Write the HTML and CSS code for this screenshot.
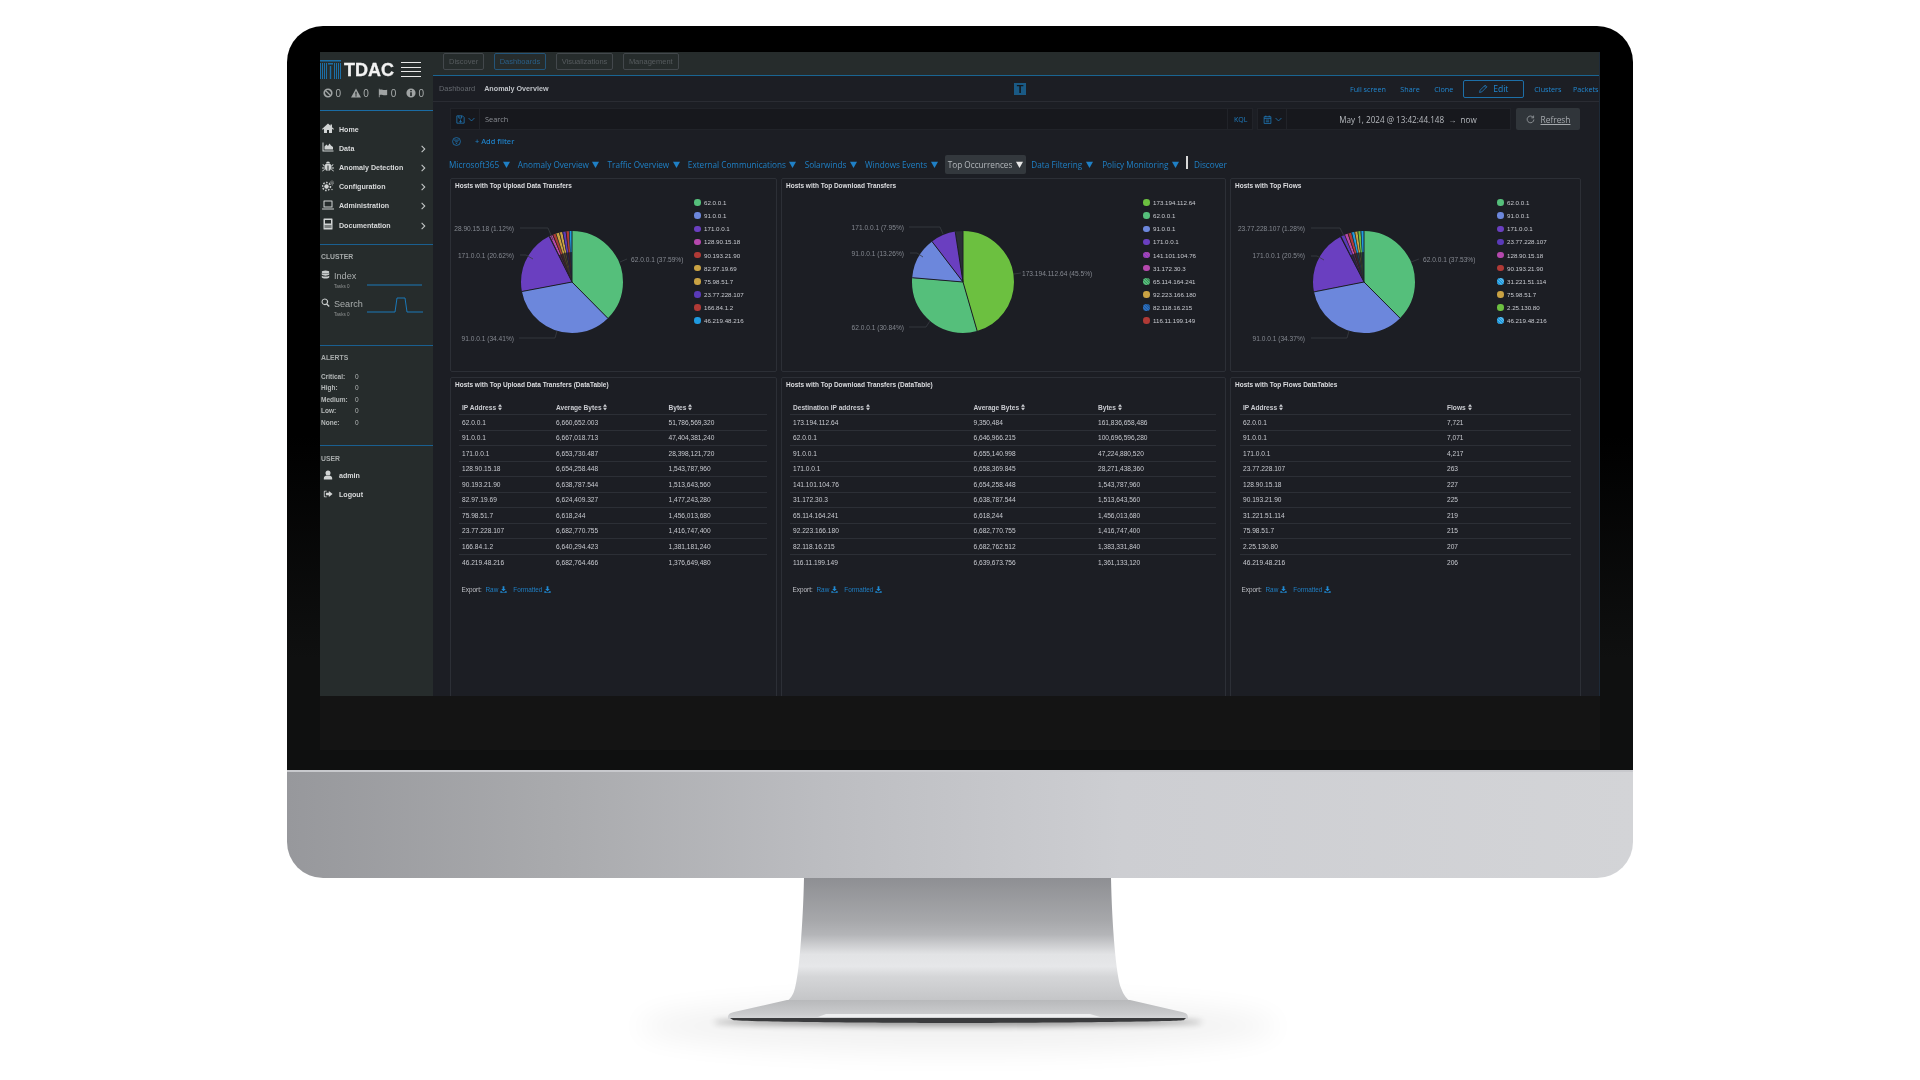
FILE: index.html
```html
<!DOCTYPE html>
<html lang="en">
<head>
<meta charset="utf-8">
<title>TDAC Anomaly Overview</title>
<link rel="stylesheet" href="styles.css">
</head>
<body>
<svg class="sprite" aria-hidden="true">
  <symbol id="i-home" viewBox="0 0 24 24"><path d="M12 3 0 14l1.6 1.6L4 13.4V22h6v-6h4v6h6v-8.6l2.4 2.2L24 14l-4-3.7V5h-3v2.5z"/></symbol>
  <symbol id="i-chart" viewBox="0 0 24 24"><path d="M1 3h2v16h20v2H1zM5 17v-6l4-4 3 3 3-5 3 4 4 3v5z"/></symbol>
  <symbol id="i-bug" viewBox="0 0 24 24"><path d="M8 7a4 4 0 0 1 8 0zM7 8h10a6 6 0 0 1 1 4v5a6 6 0 0 1-5 5V11h-2v11a6 6 0 0 1-5-5v-5a6 6 0 0 1 1-4zM1 9l1-1 3 3H6v2H4zM23 9l-1-1-3 3H18v2h2zM0 15h6v2H0zM18 15h6v2h-6zM1 23l-1-1 5-4 1 1zM23 23l1-1-5-4-1 1z"/></symbol>
  <symbol id="i-gears" viewBox="0 0 24 24"><circle class="gear" cx="9" cy="13" r="5.5"/><circle class="gear-t" cx="9" cy="13" r="8" /><circle class="gear" cx="20" cy="6" r="2.5"/><circle class="gear-t2" cx="20" cy="6" r="4"/><circle class="gear" cx="20" cy="19" r="2.2"/></symbol>
  <symbol id="i-laptop" viewBox="0 0 24 24"><path d="M4 3h16a1 1 0 0 1 1 1v13H3V4a1 1 0 0 1 1-1zm1 2v10h14V5zM0 19h24v1a1 1 0 0 1-1 1H1a1 1 0 0 1-1-1z"/></symbol>
  <symbol id="i-book" viewBox="0 0 24 24"><path d="M4 1h16a1 1 0 0 1 1 1v20a1 1 0 0 1-1 1H4a1 1 0 0 1-1-1V2a1 1 0 0 1 1-1zm2 3v7h12V4zM5 15v2h14v-2zm0 4v1h14v-1z" fill-rule="evenodd"/></symbol>
  <symbol id="i-db" viewBox="0 0 24 24"><ellipse cx="12" cy="5" rx="10" ry="4"/><path d="M2 8c2 3 18 3 20 0v4c-2 4-18 4-20 0zM2 15c2 3 18 3 20 0v4c-1 5-19 5-20 0z"/></symbol>
  <symbol id="i-search" viewBox="0 0 24 24"><path d="M10 1a9 9 0 0 1 7.2 14.4l6 6-2.6 2.6-6-6A9 9 0 1 1 10 1zm0 3a6 6 0 1 0 0 12 6 6 0 0 0 0-12z" fill-rule="evenodd"/></symbol>
  <symbol id="i-user" viewBox="0 0 24 24"><circle cx="12" cy="7" r="6"/><path d="M2 23v-4c0-4 4-5 7-6 2 1 4 1 6 0 3 1 7 2 7 6v4z"/></symbol>
  <symbol id="i-out" viewBox="0 0 24 24"><path d="M9 4H4a2 2 0 0 0-2 2v12a2 2 0 0 0 2 2h5v-2H4V6h5z"/><path d="M14 5v4H7v6h7v4l9-7z"/></symbol>
  <symbol id="i-ban" viewBox="0 0 24 24"><path d="M12 1a11 11 0 1 1 0 22 11 11 0 0 1 0-22zM5.6 7.7a8 8 0 0 0 10.7 10.7zm2.1-2.1 10.7 10.7A8 8 0 0 0 7.700 5.600z" fill-rule="evenodd"/></symbol>
  <symbol id="i-warn" viewBox="0 0 24 24"><path d="M12 1 24 23H0zm-1.500 8v7h3V9zm0 8.500v3h3v-3z" fill-rule="evenodd"/></symbol>
  <symbol id="i-flag" viewBox="0 0 24 24"><path d="M2 2h2v2c5-2 8 2 18 0v13c-9 2-13-2-18 0v5H2z"/></symbol>
  <symbol id="i-info" viewBox="0 0 24 24"><path d="M12 1a11 11 0 1 1 0 22 11 11 0 0 1 0-22zm-2 9v9h4v-9zm0-5v3h4V5z" fill-rule="evenodd"/></symbol>
  <symbol id="i-chev" viewBox="0 0 10 16"><path d="M2 1 9 8l-7 7-1.500-1.500L6 8 .5 2.500z"/></symbol>
  <symbol id="i-sort" viewBox="0 0 10 16"><path d="M5 0 10 6.500H0zM5 16 0 9.500h10z"/></symbol>
  <symbol id="i-dl" viewBox="0 0 24 24"><path d="M9 1h6v9h5l-8 8-8-8h5zM1 18h5l3 3h6l3-3h5v5H1z"/></symbol>
  <symbol id="i-tri" viewBox="0 0 10 10"><path d="M0 1h10L5 10z"/></symbol>
  <symbol id="i-save" viewBox="0 0 16 16"><path class="line-i" d="M1.500 1.500h10l3 3v10h-13zM5 1.500v4h5v-4M8 8v5M6 11l2 2 2-2"/></symbol>
  <symbol id="i-down" viewBox="0 0 12 8"><path class="line-i" d="m1 1.500 5 5 5-5"/></symbol>
  <symbol id="i-filter" viewBox="0 0 16 16"><circle class="line-i" cx="8" cy="8" r="7"/><path class="line-i" d="M3.500 5.500h9M5.500 8.500h5M7 11.500h2"/></symbol>
  <symbol id="i-cal" viewBox="0 0 16 16"><path class="line-i" d="M2 3h12v12H2zM5 1v3M11 1v3M2 6h12M5 9h6M5 12h6"/></symbol>
  <symbol id="i-pen" viewBox="0 0 16 16"><path class="line-i" d="M11 2l3 3-9 9-4 1 1-4zM9.500 3.500l3 3"/></symbol>
  <symbol id="i-refresh" viewBox="0 0 16 16"><path class="line-i" d="M13 4.500A6 6 0 1 0 14 8M13.500 1v4h-4"/></symbol>
</svg>

<main class="imac">
  <div class="bezel">
    <div class="screen">
      <aside class="sidebar">
        <div class="side-head">
          <div class="logo-row">
            <svg class="logo-mark" viewBox="0 0 21 19" aria-hidden="true">
              <rect class="bl" x="0" y="0" width="21" height="1.500"/>
              <rect class="bl" x="0" y="3" width="1" height="16"/><rect class="bl" x="2" y="3" width="1" height="16"/><rect class="bl" x="4" y="3" width="1" height="16"/><rect class="bl" x="6" y="3" width="1" height="16"/>
              <rect class="bl" x="8" y="3" width="5" height="1.500"/>
              <rect class="bl" x="14" y="3" width="1" height="16"/><rect class="bl" x="16" y="3" width="1" height="16"/><rect class="bl" x="18" y="3" width="1" height="16"/><rect class="bl" x="20" y="3" width="1" height="16"/>
              <rect class="bl" x="9.800" y="6" width="1.400" height="13"/>
            </svg>
            <span class="logo-text">TDAC</span>
            <span class="burger"><i></i><i></i><i></i><i></i></span>
          </div>
          <div class="status">
            <span class="st"><svg class="ic-st"><use href="#i-ban"/></svg>0</span>
            <span class="st"><svg class="ic-st"><use href="#i-warn"/></svg>0</span>
            <span class="st"><svg class="ic-st"><use href="#i-flag"/></svg>0</span>
            <span class="st"><svg class="ic-st"><use href="#i-info"/></svg>0</span>
          </div>
        </div>
        <nav class="menu rule">
          <a class="mi"><svg class="ic-m"><use href="#i-home"/></svg>Home</a>
          <a class="mi"><svg class="ic-m"><use href="#i-chart"/></svg>Data<svg class="chev"><use href="#i-chev"/></svg></a>
          <a class="mi"><svg class="ic-m"><use href="#i-bug"/></svg>Anomaly Detection<svg class="chev"><use href="#i-chev"/></svg></a>
          <a class="mi"><svg class="ic-m"><use href="#i-gears"/></svg>Configuration<svg class="chev"><use href="#i-chev"/></svg></a>
          <a class="mi"><svg class="ic-m"><use href="#i-laptop"/></svg>Administration<svg class="chev"><use href="#i-chev"/></svg></a>
          <a class="mi"><svg class="ic-m"><use href="#i-book"/></svg>Documentation<svg class="chev"><use href="#i-chev"/></svg></a>
        </nav>
        <section class="cluster rule">
          <h4 class="side-label">CLUSTER</h4>
          <div class="node">
            <div class="node-txt">
              <div class="node-name"><svg class="ic-n"><use href="#i-db"/></svg>Index</div>
              <div class="node-sub">Tasks 0</div>
            </div>
            <svg class="spark" viewBox="0 0 56 22"><path d="M0 16H55"/></svg>
          </div>
          <div class="node">
            <div class="node-txt">
              <div class="node-name"><svg class="ic-n"><use href="#i-search"/></svg>Search</div>
              <div class="node-sub">Tasks 0</div>
            </div>
            <svg class="spark" viewBox="0 0 56 22"><path d="M0 15H28L30 1H38L40 15H56"/></svg>
          </div>
        </section>
        <section class="alerts rule">
          <h4 class="side-label">ALERTS</h4>
          <div class="al"><b>Critical:</b><span>0</span></div>
          <div class="al"><b>High:</b><span>0</span></div>
          <div class="al"><b>Medium:</b><span>0</span></div>
          <div class="al"><b>Low:</b><span>0</span></div>
          <div class="al"><b>None:</b><span>0</span></div>
        </section>
        <section class="user">
          <h4 class="side-label">USER</h4>
          <a class="mi"><svg class="ic-m"><use href="#i-user"/></svg>admin</a>
          <a class="mi"><svg class="ic-m"><use href="#i-out"/></svg>Logout</a>
        </section>
      </aside>

      <div class="content">
        <div class="topbar">
          <span class="tbtn">Discover</span>
          <span class="tbtn on">Dashboards</span>
          <span class="tbtn">Visualizations</span>
          <span class="tbtn">Management</span>
        </div>
        <div class="crumbs">
          <div class="crumb-left"><span class="c1">Dashboard</span><span class="c2">Anomaly Overview</span></div>
          <span class="t-logo">T</span>
          <div class="crumb-right">
            <a>Full screen</a><a>Share</a><a>Clone</a>
            <a class="edit"><svg class="ic-s"><use href="#i-pen"/></svg>Edit</a>
            <a>Clusters</a><a>Packets</a>
          </div>
        </div>

        <div class="query">
          <div class="qbar search">
            <span class="seg seg-ic"><svg class="ic-s"><use href="#i-save"/></svg><svg class="ic-d"><use href="#i-down"/></svg></span>
            <span class="q-ph">Search</span>
            <span class="seg kql">KQL</span>
          </div>
          <div class="qbar date">
            <span class="seg seg-ic"><svg class="ic-s"><use href="#i-cal"/></svg><svg class="ic-d"><use href="#i-down"/></svg></span>
            <span class="q-date">May 1, 2024 @ 13:42:44.148 &nbsp;→&nbsp; now</span>
          </div>
          <span class="refresh"><svg class="ic-s"><use href="#i-refresh"/></svg><u>Refresh</u></span>
        </div>

        <div class="filter-row">
          <svg class="ic-f"><use href="#i-filter"/></svg>
          <a class="add">+ Add filter</a>
        </div>

        <div class="tabs">
          <a class="tab">Microsoft365<svg class="tri"><use href="#i-tri"/></svg></a>
          <a class="tab">Anomaly Overview<svg class="tri"><use href="#i-tri"/></svg></a>
          <a class="tab">Traffic Overview<svg class="tri"><use href="#i-tri"/></svg></a>
          <a class="tab">External Communications<svg class="tri"><use href="#i-tri"/></svg></a>
          <a class="tab">Solarwinds<svg class="tri"><use href="#i-tri"/></svg></a>
          <a class="tab">Windows Events<svg class="tri"><use href="#i-tri"/></svg></a>
          <a class="tab active">Top Occurrences<svg class="tri"><use href="#i-tri"/></svg></a>
          <a class="tab">Data Filtering<svg class="tri"><use href="#i-tri"/></svg></a>
          <a class="tab">Policy Monitoring<svg class="tri"><use href="#i-tri"/></svg></a>
          <span class="vbar"></span>
          <a class="tab">Discover</a>
        </div>

        <div class="grid">
          <!-- Upload pie -->
          <section class="panel">
            <h3 class="ptitle">Hosts with Top Upload Data Transfers</h3>
            <div class="pbody">
              <svg class="chart w1" viewBox="451 190 243 181">
                <g transform="rotate(-90 572 282)">
                  <circle class="sl green" cx="572" cy="282" r="25.500" pathLength="100" stroke-dasharray="37.590 100"/>
                  <circle class="sl blue" cx="572" cy="282" r="25.500" pathLength="100" stroke-dasharray="34.410 100" stroke-dashoffset="-37.590"/>
                  <circle class="sl purple" cx="572" cy="282" r="25.500" pathLength="100" stroke-dasharray="20.620 100" stroke-dashoffset="-72"/>
                  <circle class="sl pink" cx="572" cy="282" r="25.500" pathLength="100" stroke-dasharray="1.120 100" stroke-dashoffset="-92.620"/>
                  <circle class="sl red" cx="572" cy="282" r="25.500" pathLength="100" stroke-dasharray="1 100" stroke-dashoffset="-93.740"/>
                  <circle class="sl gold" cx="572" cy="282" r="25.500" pathLength="100" stroke-dasharray="1.100 100" stroke-dashoffset="-94.740"/>
                  <circle class="sl gold" cx="572" cy="282" r="25.500" pathLength="100" stroke-dasharray="1.050 100" stroke-dashoffset="-95.840"/>
                  <circle class="sl indigo" cx="572" cy="282" r="25.500" pathLength="100" stroke-dasharray="1.050 100" stroke-dashoffset="-96.890"/>
                  <circle class="sl red" cx="572" cy="282" r="25.500" pathLength="100" stroke-dasharray="1.030 100" stroke-dashoffset="-97.940"/>
                  <circle class="sl sky" cx="572" cy="282" r="25.500" pathLength="100" stroke-dasharray="1.030 100" stroke-dashoffset="-98.970"/>
                  <circle class="core" cx="572" cy="282" r="15" pathLength="100" stroke-dasharray="7.380 100" stroke-dashoffset="-92.620"/>
                  <circle class="tick" cx="572" cy="282" r="25.500" pathLength="100" stroke-dasharray=".25 .87 .25 .75 .25 .85 .25 .8 .25 .8 .25 .78 .25 100" stroke-dashoffset="-92.620"/>
                </g>
                <path class="sep" d="M607.900 318.300 572 282 521.900 291.500M549.200 236.400 572 282V231"/>
                <path class="lead" d="M520 228H548L553 240M520 255H526L533 259M620 262L627 259M519 338H555L557 331"/>
                <text class="lbl" x="514" y="230.500" text-anchor="end">28.90.15.18 (1.12%)</text>
                <text class="lbl" x="514" y="257.500" text-anchor="end">171.0.0.1 (20.62%)</text>
                <text class="lbl" x="631" y="261.500">62.0.0.1 (37.59%)</text>
                <text class="lbl" x="514" y="340.500" text-anchor="end">91.0.0.1 (34.41%)</text>
              </svg>
              <ul class="legend">
                <li><i class="dot d-green"></i>62.0.0.1</li><li><i class="dot d-blue"></i>91.0.0.1</li><li><i class="dot d-purple"></i>171.0.0.1</li><li><i class="dot d-pink"></i>128.90.15.18</li><li><i class="dot d-red"></i>90.193.21.90</li><li><i class="dot d-gold"></i>82.97.19.69</li><li><i class="dot d-gold"></i>75.98.51.7</li><li><i class="dot d-indigo"></i>23.77.228.107</li><li><i class="dot d-red"></i>166.84.1.2</li><li><i class="dot d-sky"></i>46.219.48.216</li>
              </ul>
            </div>
          </section>

          <!-- Download pie -->
          <section class="panel">
            <h3 class="ptitle">Hosts with Top Download Transfers</h3>
            <div class="pbody">
              <svg class="chart w2" viewBox="782 190 361 181">
                <g transform="rotate(-90 963 282)">
                  <circle class="sl lime" cx="963" cy="282" r="25.500" pathLength="100" stroke-dasharray="45.500 100"/>
                  <circle class="sl green" cx="963" cy="282" r="25.500" pathLength="100" stroke-dasharray="30.840 100" stroke-dashoffset="-45.500"/>
                  <circle class="sl blue" cx="963" cy="282" r="25.500" pathLength="100" stroke-dasharray="13.260 100" stroke-dashoffset="-76.340"/>
                  <circle class="sl purple" cx="963" cy="282" r="25.500" pathLength="100" stroke-dasharray="7.950 100" stroke-dashoffset="-89.600"/>
                  <circle class="sl dim" cx="963" cy="282" r="25.500" pathLength="100" stroke-dasharray="2.450 100" stroke-dashoffset="-97.550"/>
                </g>
                <path class="sep" d="M977.200 331 963 282 912.200 277.700M932 241.500 963 282 955.200 231.600M963 282V231"/>
                <path class="lead" d="M909 227H940L943 234M910 253H917L923 257M1014 274L1021 273M909 327H926L930 321"/>
                <text class="lbl" x="904" y="229.500" text-anchor="end">171.0.0.1 (7.95%)</text>
                <text class="lbl" x="904" y="255.500" text-anchor="end">91.0.0.1 (13.26%)</text>
                <text class="lbl" x="1022" y="275.500">173.194.112.64 (45.5%)</text>
                <text class="lbl" x="904" y="329.500" text-anchor="end">62.0.0.1 (30.84%)</text>
              </svg>
              <ul class="legend">
                <li><i class="dot d-lime"></i>173.194.112.64</li><li><i class="dot d-green"></i>62.0.0.1</li><li><i class="dot d-blue"></i>91.0.0.1</li><li><i class="dot d-purple"></i>171.0.0.1</li><li><i class="dot d-hatch-v"></i>141.101.104.76</li><li><i class="dot d-pink"></i>31.172.30.3</li><li><i class="dot d-hatch-g"></i>65.114.164.241</li><li><i class="dot d-gold"></i>92.223.166.180</li><li><i class="dot d-hatch-b"></i>82.118.16.215</li><li><i class="dot d-red"></i>116.11.199.149</li>
              </ul>
            </div>
          </section>

          <!-- Flows pie -->
          <section class="panel">
            <h3 class="ptitle">Hosts with Top Flows</h3>
            <div class="pbody">
              <svg class="chart w3" viewBox="1231 190 266 181">
                <g transform="rotate(-90 1364 282)">
                  <circle class="sl green" cx="1364" cy="282" r="25.500" pathLength="100" stroke-dasharray="37.530 100"/>
                  <circle class="sl blue" cx="1364" cy="282" r="25.500" pathLength="100" stroke-dasharray="34.370 100" stroke-dashoffset="-37.530"/>
                  <circle class="sl purple" cx="1364" cy="282" r="25.500" pathLength="100" stroke-dasharray="20.500 100" stroke-dashoffset="-71.900"/>
                  <circle class="sl indigo" cx="1364" cy="282" r="25.500" pathLength="100" stroke-dasharray="1.280 100" stroke-dashoffset="-92.400"/>
                  <circle class="sl pink" cx="1364" cy="282" r="25.500" pathLength="100" stroke-dasharray="1.100 100" stroke-dashoffset="-93.680"/>
                  <circle class="sl red" cx="1364" cy="282" r="25.500" pathLength="100" stroke-dasharray="1.100 100" stroke-dashoffset="-94.780"/>
                  <circle class="sl sky" cx="1364" cy="282" r="25.500" pathLength="100" stroke-dasharray="1 100" stroke-dashoffset="-95.880"/>
                  <circle class="sl gold" cx="1364" cy="282" r="25.500" pathLength="100" stroke-dasharray="1 100" stroke-dashoffset="-96.880"/>
                  <circle class="sl lime" cx="1364" cy="282" r="25.500" pathLength="100" stroke-dasharray="1 100" stroke-dashoffset="-97.880"/>
                  <circle class="sl sky" cx="1364" cy="282" r="25.500" pathLength="100" stroke-dasharray="1.120 100" stroke-dashoffset="-98.880"/>
                  <circle class="core" cx="1364" cy="282" r="15" pathLength="100" stroke-dasharray="7.600 100" stroke-dashoffset="-92.400"/>
                  <circle class="tick" cx="1364" cy="282" r="25.500" pathLength="100" stroke-dasharray=".25 1.030 .25 .85 .25 .85 .25 .75 .25 .75 .25 .75 .25 100" stroke-dashoffset="-92.400"/>
                </g>
                <path class="sep" d="M1400 318.100 1364 282 1314 291.900M1340.500 236.700 1364 282V231"/>
                <path class="lead" d="M1311 228H1340L1344 236M1311 256H1317L1324 260M1411 262L1419 259M1311 338H1347L1349 331"/>
                <text class="lbl" x="1305" y="230.500" text-anchor="end">23.77.228.107 (1.28%)</text>
                <text class="lbl" x="1305" y="258" text-anchor="end">171.0.0.1 (20.5%)</text>
                <text class="lbl" x="1423" y="261.500">62.0.0.1 (37.53%)</text>
                <text class="lbl" x="1305" y="340.500" text-anchor="end">91.0.0.1 (34.37%)</text>
              </svg>
              <ul class="legend">
                <li><i class="dot d-green"></i>62.0.0.1</li><li><i class="dot d-blue"></i>91.0.0.1</li><li><i class="dot d-purple"></i>171.0.0.1</li><li><i class="dot d-indigo"></i>23.77.228.107</li><li><i class="dot d-pink"></i>128.90.15.18</li><li><i class="dot d-red"></i>90.193.21.90</li><li><i class="dot d-hatch-s"></i>31.221.51.114</li><li><i class="dot d-gold"></i>75.98.51.7</li><li><i class="dot d-lime"></i>2.25.130.80</li><li><i class="dot d-hatch-s"></i>46.219.48.216</li>
              </ul>
            </div>
          </section>

          <!-- Upload table -->
          <section class="panel">
            <h3 class="ptitle">Hosts with Top Upload Data Transfers (DataTable)</h3>
            <table class="tbl t1">
              <thead><tr><th>IP Address <svg class="sort"><use href="#i-sort"/></svg></th><th>Average Bytes <svg class="sort"><use href="#i-sort"/></svg></th><th>Bytes <svg class="sort"><use href="#i-sort"/></svg></th></tr></thead>
              <tbody>
                <tr><td>62.0.0.1</td><td>6,660,652.003</td><td>51,786,569,320</td></tr>
                <tr><td>91.0.0.1</td><td>6,667,018.713</td><td>47,404,381,240</td></tr>
                <tr><td>171.0.0.1</td><td>6,653,730.487</td><td>28,398,121,720</td></tr>
                <tr><td>128.90.15.18</td><td>6,654,258.448</td><td>1,543,787,960</td></tr>
                <tr><td>90.193.21.90</td><td>6,638,787.544</td><td>1,513,643,560</td></tr>
                <tr><td>82.97.19.69</td><td>6,624,409.327</td><td>1,477,243,280</td></tr>
                <tr><td>75.98.51.7</td><td>6,618,244</td><td>1,456,013,680</td></tr>
                <tr><td>23.77.228.107</td><td>6,682,770.755</td><td>1,416,747,400</td></tr>
                <tr><td>166.84.1.2</td><td>6,640,294.423</td><td>1,381,181,240</td></tr>
                <tr><td>46.219.48.216</td><td>6,682,764.466</td><td>1,376,649,480</td></tr>
              </tbody>
            </table>
            <div class="export"><span class="ex-l">Export:</span><a>Raw <svg class="ic-dl"><use href="#i-dl"/></svg></a><a>Formatted <svg class="ic-dl"><use href="#i-dl"/></svg></a></div>
          </section>

          <!-- Download table -->
          <section class="panel">
            <h3 class="ptitle">Hosts with Top Download Transfers (DataTable)</h3>
            <table class="tbl t2">
              <thead><tr><th>Destination IP address <svg class="sort"><use href="#i-sort"/></svg></th><th>Average Bytes <svg class="sort"><use href="#i-sort"/></svg></th><th>Bytes <svg class="sort"><use href="#i-sort"/></svg></th></tr></thead>
              <tbody>
                <tr><td>173.194.112.64</td><td>9,350,484</td><td>161,836,658,486</td></tr>
                <tr><td>62.0.0.1</td><td>6,646,966.215</td><td>100,696,596,280</td></tr>
                <tr><td>91.0.0.1</td><td>6,655,140.998</td><td>47,224,880,520</td></tr>
                <tr><td>171.0.0.1</td><td>6,658,369.845</td><td>28,271,438,360</td></tr>
                <tr><td>141.101.104.76</td><td>6,654,258.448</td><td>1,543,787,960</td></tr>
                <tr><td>31.172.30.3</td><td>6,638,787.544</td><td>1,513,643,560</td></tr>
                <tr><td>65.114.164.241</td><td>6,618,244</td><td>1,456,013,680</td></tr>
                <tr><td>92.223.166.180</td><td>6,682,770.755</td><td>1,416,747,400</td></tr>
                <tr><td>82.118.16.215</td><td>6,682,762.512</td><td>1,383,331,840</td></tr>
                <tr><td>116.11.199.149</td><td>6,639,673.756</td><td>1,361,133,120</td></tr>
              </tbody>
            </table>
            <div class="export"><span class="ex-l">Export:</span><a>Raw <svg class="ic-dl"><use href="#i-dl"/></svg></a><a>Formatted <svg class="ic-dl"><use href="#i-dl"/></svg></a></div>
          </section>

          <!-- Flows table -->
          <section class="panel">
            <h3 class="ptitle">Hosts with Top Flows DataTables</h3>
            <table class="tbl t3">
              <thead><tr><th>IP Address <svg class="sort"><use href="#i-sort"/></svg></th><th>Flows <svg class="sort"><use href="#i-sort"/></svg></th></tr></thead>
              <tbody>
                <tr><td>62.0.0.1</td><td>7,721</td></tr>
                <tr><td>91.0.0.1</td><td>7,071</td></tr>
                <tr><td>171.0.0.1</td><td>4,217</td></tr>
                <tr><td>23.77.228.107</td><td>263</td></tr>
                <tr><td>128.90.15.18</td><td>227</td></tr>
                <tr><td>90.193.21.90</td><td>225</td></tr>
                <tr><td>31.221.51.114</td><td>219</td></tr>
                <tr><td>75.98.51.7</td><td>215</td></tr>
                <tr><td>2.25.130.80</td><td>207</td></tr>
                <tr><td>46.219.48.216</td><td>206</td></tr>
              </tbody>
            </table>
            <div class="export"><span class="ex-l">Export:</span><a>Raw <svg class="ic-dl"><use href="#i-dl"/></svg></a><a>Formatted <svg class="ic-dl"><use href="#i-dl"/></svg></a></div>
          </section>
        </div>
      </div>
    </div>
    <div class="under-screen"></div>
  </div>
  <div class="chin"></div>
</main>

<svg class="stand" viewBox="0 878 1920 202" aria-hidden="true">
  <defs>
    <linearGradient id="neck" x1="0" y1="0" x2="0" y2="1">
      <stop offset="0" stop-color="#8e8f93"/><stop offset=".35" stop-color="#a7a8ab"/><stop offset=".46" stop-color="#b4b5b8"/><stop offset=".62" stop-color="#e2e3e5"/><stop offset=".72" stop-color="#e6e7e9"/><stop offset=".8" stop-color="#d5d6d8"/><stop offset="1" stop-color="#c4c5c7"/>
    </linearGradient>
    <linearGradient id="foot" x1="0" y1="0" x2="0" y2="1">
      <stop offset="0" stop-color="#b8b9bb"/><stop offset=".7" stop-color="#c9cacc"/><stop offset="1" stop-color="#d6d7d9"/>
    </linearGradient>
    <filter id="soft" x="-30%" y="-200%" width="160%" height="500%"><feGaussianBlur stdDeviation="14"/></filter>
    <filter id="soft2" x="-10%" y="-200%" width="120%" height="500%"><feGaussianBlur stdDeviation="3"/></filter>
  </defs>
  <ellipse class="sh1" cx="958" cy="1026" rx="320" ry="26" filter="url(#soft)"/>
  <ellipse class="sh2" cx="958" cy="1022" rx="245" ry="4" filter="url(#soft2)"/>
  <path class="neck" d="M804 878H1111C1112 925 1116 975 1121 988C1124 996 1127 999 1130 1001H787C790 999 793 996 795 988C799 975 803 925 804 878Z"/>
  <path class="foot" d="M787 1000H1130L1182 1012C1187 1013 1188 1015 1188 1018V1019H728V1018C728 1015 729 1013 734 1012Z"/>
  <path class="foot-hi" d="M826 1014H1090L1100 1017H818Z"/>
  <path class="foot-dk" d="M730 1018H1186L1184 1020C1180 1022 1000 1023 958 1023C916 1023 740 1022 733 1020Z"/>
</svg>
</body>
</html>
```

FILE: styles.css
```css
* { box-sizing: border-box; }
html, body { margin: 0; padding: 0; background: #fff; }
body { width: 1920px; height: 1080px; overflow: hidden; font-family: "Liberation Sans", Arial, sans-serif; color: #ccc; }
h3, h4, ul { margin: 0; padding: 0; font-weight: 700; list-style: none; }
a { cursor: pointer; }
.sprite { position: absolute; width: 0; height: 0; overflow: hidden; }
.line-i { fill: none; stroke: currentColor; stroke-width: 1.3; }

/* Monitor */
.imac { width: 1346px; margin: 26px auto 0; }
.bezel { height: 744px; padding: 26px 33px 0; border-radius: 36px 36px 0 0; background: linear-gradient(180deg, #000 0, #000 55%, #0f1010 85%, #0f1010 100%); }
.screen { display: flex; height: 644px; overflow: hidden; background: #1c1e24; filter: blur(.3px); }
.under-screen { height: 54px; background: #141414; }
.chin { height: 108px; border-top: 2px solid #c8c9cd; border-radius: 0 0 36px 36px; background: linear-gradient(90deg, #97989c 0, #a9aaad 20%, #bcbdc1 40%, #cdced2 62%, #d3d4d7 100%); }
.stand { display: block; width: 1920px; height: 202px; }
.neck { fill: url(#neck); }
.foot { fill: url(#foot); }
.foot-hi { fill: #eeeff0; }
.foot-dk { fill: #3a3b3d; }
.sh1 { fill: #000; opacity: .05; }
.sh2 { fill: #000; opacity: .4; }

/* Sidebar */
.sidebar { flex: 0 0 113px; background: #262c2c; }
.side-head { height: 59px; padding-top: 8px; border-bottom: 1px solid #1a6ca4; }
.logo-row { display: flex; align-items: center; height: 19px; }
.logo-mark { width: 21px; height: 19px; }
.bl { fill: #1c6ea6; }
.logo-text { margin-left: 3px; padding-top: 1.500px; font-size: 18px; font-weight: 700; color: #f2f2f2; line-height: 19px; letter-spacing: 0; -webkit-text-stroke: .3px #f2f2f2; }
.burger { display: flex; flex-direction: column; gap: 3.300px; width: 20px; margin-left: 7px; }
.burger i { display: block; height: 1.200px; background: #e8e8e8; }
.status { display: flex; justify-content: space-between; padding: 0 9px 0 3px; margin-top: 8.500px; font-size: 10px; line-height: 11px; color: #a9adad; }
.st { display: flex; align-items: center; gap: 2.500px; }
.ic-st { width: 10px; height: 10px; fill: #a0a4a4; }
.rule { border-bottom: 1px solid #1a5f90; }
.menu { height: 133.500px; padding-top: 9px; }
.mi { display: flex; align-items: center; height: 19.200px; padding: 0 7px 0 2px; font-size: 7.100px; font-weight: 700; color: #d8dadb; }
.ic-m { flex: none; width: 12px; height: 12px; margin-right: 5px; margin-top: -3px; fill: #d0d3d3; }
.gear { fill: #d0d3d3; stroke: #262c2c; stroke-width: 2; }
.gear-t { fill: none; stroke: #d0d3d3; stroke-width: 3; stroke-dasharray: 3 3; }
.gear-t2 { fill: none; stroke: #d0d3d3; stroke-width: 1.500; stroke-dasharray: 2 2; }
.chev { width: 5px; height: 8px; margin-left: auto; fill: #c4c8c8; }
.side-label { height: 12px; padding-left: 1px; font-size: 6.800px; line-height: 12px; color: #a7abab; letter-spacing: 0; }
.cluster { height: 101px; padding-top: 6px; }
.node { display: flex; height: 22px; margin-top: 6px; }
.node-txt { width: 47px; padding-left: 1px; }
.node-name { display: flex; align-items: center; height: 14px; font-size: 9.100px; color: #a9adad; }
.ic-n { width: 9px; height: 9px; margin: -2px 4px 0 0; fill: #c8cccc; }
.node-sub { height: 6px; padding-left: 13px; margin-top: 1px; font-size: 4.600px; line-height: 6px; color: #8f9393; }
.spark { width: 56px; height: 22px; fill: none; stroke: #1a78b8; stroke-width: 1; }
.alerts { height: 100.500px; padding-top: 6px; }
.al { display: flex; height: 11.600px; padding-left: 1px; font-size: 6.500px; line-height: 11.600px; color: #b5b9b9; }
.side-label + .al { margin-top: 7px; }
.al b { width: 34px; }
.user { padding-top: 6.500px; }
.user .side-label { margin-bottom: 2px; }
.user .ic-m { width: 10px; height: 10px; margin: -2px 6px 0 1px; }

/* Content */
.content { flex: 1; min-width: 0; background: #1c1e24; border-right: 1px solid #1d2a38; }
.topbar { display: flex; gap: 9.500px; height: 24px; padding: 1px 0 0 10px; background: #262c2c; border-bottom: 1px solid #1a6592; }
.tbtn { height: 17px; padding: 0 5px; border: 1px solid #43484c; border-radius: 2px; font-size: 7.500px; line-height: 15px; color: #565b5e; }
.tbtn.on { border-color: #245478; color: #2a5f88; }
.crumbs { display: flex; align-items: center; height: 26px; border-bottom: 1px solid #2a2c33; }
.crumb-left { display: flex; gap: 9px; width: 581px; padding-left: 6px; font-size: 7.400px; }
.c1 { color: #666a70; }
.c2 { color: #bfc2c7; font-weight: 700; font-size: 7.200px; }
.t-logo { width: 12px; height: 12px; background: #1a5a85; color: #14181c; font-size: 11px; font-weight: 700; line-height: 12px; text-align: center; }
.crumb-right { display: flex; align-items: center; gap: 14.500px; margin-left: auto; padding-right: .5px; font-family: "Open Sans", sans-serif; font-size: 7.200px; font-weight: 500; color: #2187d0; }
.crumb-right a:last-child { margin-left: -3px; }
.edit { display: flex; align-items: center; justify-content: center; gap: 5px; width: 61px; height: 18px; margin: 0 -4.500px; border: 1px solid #1d6fa8; border-radius: 2px; font-size: 8.600px; }
.ic-s { width: 9px; height: 9px; }

.query { display: flex; height: 22px; margin: 6px 0 0 17px; }
.qbar { display: flex; align-items: center; height: 22px; background: #17181d; border: 1px solid #212329; }
.search { width: 803px; margin-right: 4px; }
.date { width: 254px; margin-right: 5px; }
.seg { display: flex; align-items: center; height: 100%; }
.seg-ic { flex: none; justify-content: center; gap: 3px; width: 29px; border-right: 1px solid #212329; color: #1f7fc4; }
.ic-d { width: 7px; height: 5px; }
.q-ph { flex: 1; padding-left: 5px; font-family: "Open Sans", sans-serif; font-size: 7.400px; color: #8a8d93; }
.kql { width: 25px; padding-left: 6px; border-left: 1px solid #212329; font-size: 7px; font-family: "Open Sans", sans-serif; color: #1f7fc4; }
.q-date { flex: 1; padding-left: 19px; text-align: center; font-family: "Open Sans", sans-serif; font-size: 8.100px; color: #b6b9be; white-space: nowrap; }
.refresh { display: flex; align-items: center; justify-content: center; gap: 6px; width: 64px; height: 22px; border-radius: 2px; background: #30353a; font-family: "Open Sans", sans-serif; font-size: 8.400px; color: #a6aaae; }

.filter-row { display: flex; align-items: center; height: 22px; margin-left: 17px; }
.ic-f { width: 9px; height: 9px; margin-left: 2px; color: #1f7fc4; }
.add { margin-left: 14px; font-family: "Open Sans", sans-serif; font-size: 7.400px; font-weight: 600; color: #1f7fc4; }

.tabs { display: flex; align-items: center; height: 19px; margin: 2.500px 0 0 16px; font-family: "Open Sans", sans-serif; font-size: 8.200px; color: #1f80c6; white-space: nowrap; }
.tab { display: flex; align-items: center; height: 19px; margin-right: 8.200px; }
.tab.active { margin: 0 5.500px 0 -1px; padding: 0 3px; border-radius: 2px; background: #33383d; color: #b4b8bc; }
.active ~ .tab { margin-right: 9.500px; }
.tri { width: 7px; height: 7px; margin-left: 3.500px; fill: currentColor; }
.active .tri { fill: #e8e8e8; }
.vbar { width: 1.500px; height: 13px; margin: -4px 6px 0 -2px; background: #d8d8d8; }

.grid { display: grid; grid-template-columns: 327px 445px 351px; grid-template-rows: 194px 340px; gap: 5px 4px; margin: 4.500px 0 0 17px; }
.panel { min-width: 0; overflow: hidden; background: #1c1e24; border: 1px solid #2c2f36; border-radius: 2px; }
.ptitle { height: 11px; padding: 3px 0 0 4px; font-size: 6.500px; line-height: 8px; color: #dcdde0; white-space: nowrap; }
.pbody { display: flex; }
.chart { flex: none; height: 181px; }
.w1 { width: 243px; }
.w2 { width: 361px; }
.w3 { width: 266px; }
.sl { fill: none; stroke-width: 51; }
.green { stroke: #55bf7b; }
.blue { stroke: #6c87dc; }
.purple { stroke: #6a3fc0; }
.pink { stroke: #b548ad; }
.red { stroke: #b03a36; }
.gold { stroke: #c9a243; }
.indigo { stroke: #5a3ab8; }
.sky { stroke: #1f9ae0; }
.lime { stroke: #6cc040; }
.dim { stroke: #2a2f36; }
.core { fill: none; stroke: #1c1e24; stroke-width: 30; opacity: .75; }
.tick { fill: none; stroke: #1c1e24; stroke-width: 51; }
.sep { fill: none; stroke: #1c1e24; stroke-width: 1; }
.lead { fill: none; stroke: #3a3d44; stroke-width: .8; }
.lbl { font-size: 6.600px; fill: #858991; }
.legend { padding-top: 6px; font-size: 6.200px; font-weight: 400; color: #c8cad0; }
.legend li { display: flex; align-items: center; height: 13.130px; gap: 3.500px; }
.dot { display: block; width: 6.500px; height: 6.500px; border-radius: 50%; }
.d-green { background: #55bf7b; }
.d-blue { background: #6c87dc; }
.d-purple { background: #6a3fc0; }
.d-pink { background: #b548ad; }
.d-red { background: #b03a36; }
.d-gold { background: #c9a243; }
.d-indigo { background: #5a3ab8; }
.d-sky { background: #1f9ae0; }
.d-lime { background: #6cc040; }
.d-hatch-v { background: repeating-linear-gradient(45deg, #8a3fc0 0 1px, #b548ad 1px 2px); }
.d-hatch-g { background: repeating-linear-gradient(45deg, #55bf7b 0 1px, #3f8f5c 1px 2px); }
.d-hatch-b { background: repeating-linear-gradient(45deg, #2c6fc0 0 1px, #1f5a9c 1px 2px); }
.d-hatch-s { background: repeating-linear-gradient(45deg, #1f9ae0 0 1px, #5ab8e8 1px 2px); }

.tbl { width: 308px; margin: 11px 0 0 8px; border-collapse: collapse; table-layout: fixed; font-size: 6.600px; color: #c8cad0; }
.tbl th { height: 14.500px; padding: 0 0 0 3px; border-bottom: 1px solid #2c2f36; text-align: left; font-weight: 700; color: #c9cbd0; }
.tbl td { height: 15.500px; padding: 0 0 0 3px; border-bottom: 1px solid #2c2f36; }
.tbl tr:last-child td { border-bottom: 0; }
.sort { width: 4px; height: 6.500px; vertical-align: -1px; fill: #c9cbd0; }
.t1 th:nth-child(1) { width: 94px; }
.t1 th:nth-child(2) { width: 112.500px; }
.t2 { width: 426px; }
.t2 th:nth-child(1) { width: 180.500px; }
.t2 th:nth-child(2) { width: 124.500px; }
.t3 { width: 331px; margin-left: 9px; }
.t3 th:nth-child(1) { width: 204px; }
.export { display: flex; align-items: center; height: 12px; margin: 13.500px 0 0 10.500px; font-size: 6.400px; color: #1f7fc4; }
.ex-l { width: 24px; color: #bfc1c6; }
.export a { display: flex; align-items: center; gap: 2px; margin-right: 6px; }
.ic-dl { width: 7px; height: 7px; fill: #1f8ad4; }
```
